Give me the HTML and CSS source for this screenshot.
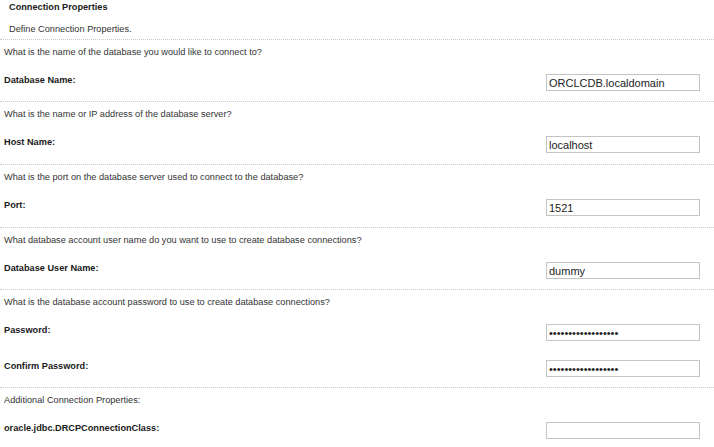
FILE: index.html
```html
<!DOCTYPE html>
<html>
<head>
<meta charset="utf-8">
<link rel="stylesheet" href="styles.css">
</head>
<body>
<div class="page">
  <div class="header">
    <div class="title">Connection Properties</div>
    <div class="desc">Define Connection Properties.</div>
  </div>

  <div class="section">
    <div class="question">What is the name of the database you would like to connect to?</div>
    <div class="field">
      <label class="label">Database Name:</label>
      <input class="input" type="text" value="ORCLCDB.localdomain">
    </div>
  </div>

  <div class="section section-tall">
    <div class="question">What is the name or IP address of the database server?</div>
    <div class="field">
      <label class="label">Host Name:</label>
      <input class="input" type="text" value="localhost">
    </div>
  </div>

  <div class="section section-tall">
    <div class="question">What is the port on the database server used to connect to the database?</div>
    <div class="field">
      <label class="label">Port:</label>
      <input class="input" type="text" value="1521">
    </div>
  </div>

  <div class="section">
    <div class="question">What database account user name do you want to use to create database connections?</div>
    <div class="field">
      <label class="label">Database User Name:</label>
      <input class="input" type="text" value="dummy">
    </div>
  </div>

  <div class="section">
    <div class="question">What is the database account password to use to create database connections?</div>
    <div class="field">
      <label class="label">Password:</label>
      <input class="input" type="password" value="dummypassword12345">
    </div>
    <div class="field">
      <label class="label">Confirm Password:</label>
      <input class="input" type="password" value="dummypassword12345">
    </div>
  </div>

  <div class="section">
    <div class="question">Additional Connection Properties:</div>
    <div class="field">
      <label class="label">oracle.jdbc.DRCPConnectionClass:</label>
      <input class="input" type="text" value="">
    </div>
  </div>
</div>
</body>
</html>
```

FILE: styles.css
```css
html, body {
  margin: 0;
  padding: 0;
  background: #ffffff;
}

body {
  font-family: "Liberation Sans", Arial, sans-serif;
  font-size: 9.2px;
  color: #333333;
  width: 714px;
  height: 447px;
  overflow: hidden;
}

.header {
  padding: 0 9px 3px 9px;
}

.title {
  font-weight: bold;
  color: #1a1a1a;
  line-height: 14px;
}

.desc {
  margin-top: 8px;
  line-height: 14px;
}

.section {
  border-top: 1px dotted #c8c8c8;
  padding: 0 14px 3px 4px;
}

.section-tall {
  padding-bottom: 4px;
}

.question {
  line-height: 14px;
  padding-top: 5px;
  height: 17px;
}

.field {
  display: flex;
  align-items: center;
  justify-content: space-between;
  height: 36px;
}

.label {
  font-weight: bold;
  color: #1a1a1a;
  line-height: 14px;
}

.input {
  box-sizing: border-box;
  width: 154px;
  height: 17px;
  margin: 5px 0 0 0;
  padding: 0 2px;
  border: 1px solid #c4c4c4;
  font-family: "Liberation Sans", Arial, sans-serif;
  font-size: 11px;
  color: #222222;
  background: #ffffff;
  outline: none;
}
```
